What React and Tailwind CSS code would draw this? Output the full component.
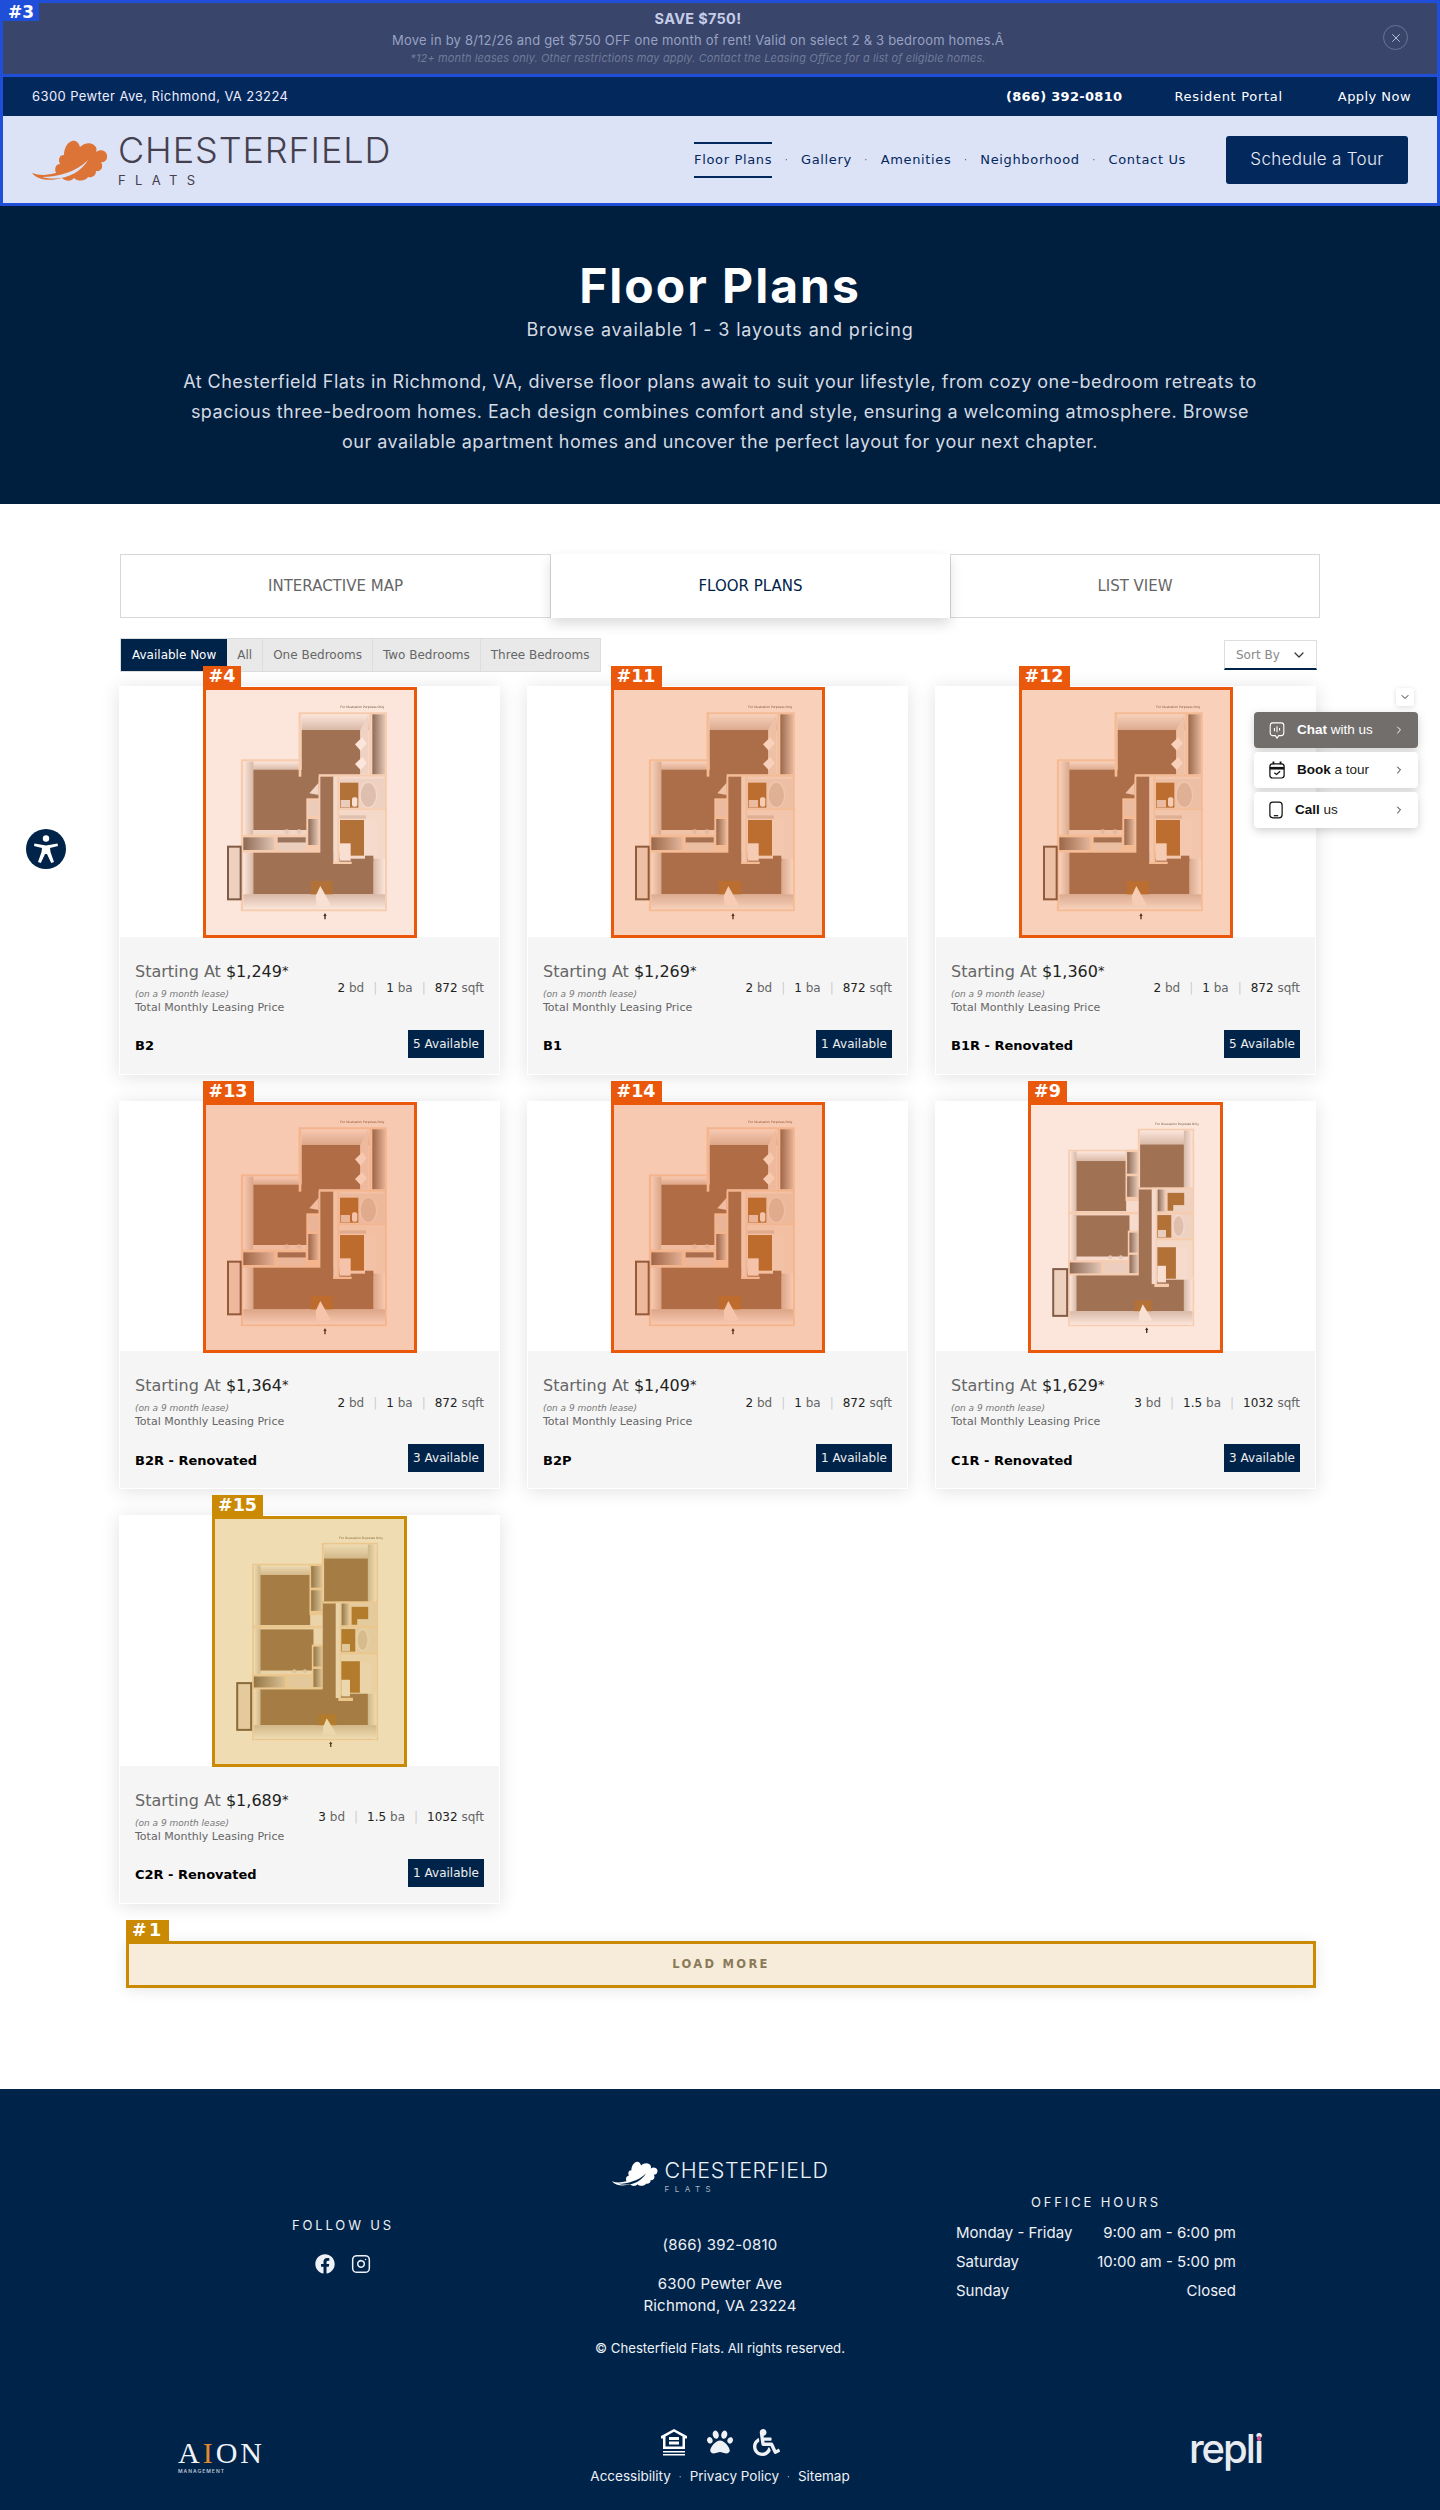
import React from "react";
import { X, ChevronDown, ChevronRight, Instagram } from "lucide-react";
import { FaFacebook, FaPaw, FaWheelchair } from "react-icons/fa";

const DJ = "font-['DejaVu_Sans',sans-serif]";
const MT = "font-['Inter','Liberation_Sans',sans-serif]";

function Defs() {
  return (
    <defs>
      <linearGradient id="wd" x1="0" y1="0" x2="0" y2="1">
        <stop offset="0" stopColor="#ffffff" />
        <stop offset="1" stopColor="#d6cbc3" />
      </linearGradient>
      <linearGradient id="wu" x1="0" y1="1" x2="0" y2="0">
        <stop offset="0" stopColor="#ffffff" />
        <stop offset="1" stopColor="#d6cbc3" />
      </linearGradient>
      <linearGradient id="wr" x1="0" y1="0" x2="1" y2="0">
        <stop offset="0" stopColor="#ffffff" />
        <stop offset="1" stopColor="#d4c9c1" />
      </linearGradient>
      <linearGradient id="wl" x1="1" y1="0" x2="0" y2="0">
        <stop offset="0" stopColor="#ffffff" />
        <stop offset="1" stopColor="#d4c9c1" />
      </linearGradient>
      <linearGradient id="cl" x1="0" y1="0" x2="1" y2="0">
        <stop offset="0" stopColor="#7d6d62" />
        <stop offset="1" stopColor="#e2dad4" />
      </linearGradient>
    </defs>
  );
}

const WALL = "#f9e1ca";
const FLOOR = "#957660";
const WOOD = "#a9763f";
const LIGHT = "#f8f3ef";

function PlanOne() {
  return (
    <svg viewBox="18 30 624 735" className="block w-full h-full blur-[0.6px]">
      <Defs />
      <text x="421" y="85" fontSize="9" fill="#5a5048" fontFamily="DejaVu Sans">For Illustration Purposes Only</text>
      <path d="M126 241H299V100H557V690H126Z" fill={LIGHT} stroke={WALL} strokeWidth="7" />
      <rect x="305" y="103" width="203" height="47" fill="url(#wd)" />
      <rect x="305" y="150" width="176" height="133" fill={FLOOR} />
      <path d="M481 150L505 103V283H481Z" fill="#f0e8e2" />
      <path d="M465 193L487 172 500 190 482 212Z" fill="#fff" />
      <path d="M465 252L487 231 500 250 482 270Z" fill="#fff" />
      <rect x="508" y="100" width="6" height="190" fill={WALL} />
      <rect x="517" y="103" width="38" height="180" fill="url(#cl)" />
      <rect x="296" y="284" width="264" height="6" fill={WALL} />
      <rect x="296" y="290" width="60" height="18" fill="#ece3dc" />
      <rect x="130" y="245" width="166" height="24" fill="url(#wd)" />
      <rect x="130" y="245" width="30" height="222" fill="url(#wr)" />
      <rect x="160" y="269" width="196" height="181" fill={FLOOR} />
      <rect x="296" y="240" width="8" height="50" fill={WALL} />
      <path d="M328 340L356 308V345Z" fill="#f3ebe5" />
      <rect x="356" y="290" width="5" height="70" fill={WALL} />
      <rect x="160" y="450" width="160" height="15" fill="#f3ebe5" />
      <rect x="123" y="464" width="237" height="54" fill={WALL} />
      <rect x="130" y="472" width="93" height="38" fill="url(#cl)" />
      <rect x="233" y="472" width="84" height="16" fill="#8d7a6d" />
      <rect x="233" y="488" width="84" height="24" fill="#ece3dc" />
      <circle cx="260" cy="455" r="7" fill="#e6dcd4" />
      <circle cx="297" cy="455" r="7" fill="#e6dcd4" />
      <rect x="319" y="355" width="41" height="163" fill={WALL} />
      <rect x="325" y="362" width="30" height="46" fill="#ebe1da" />
      <rect x="325" y="417" width="30" height="78" fill="url(#cl)" />
      <rect x="361" y="290" width="40" height="240" fill={FLOOR} />
      <rect x="130" y="518" width="30" height="170" fill="url(#wr)" />
      <rect x="520" y="518" width="35" height="170" fill="url(#wl)" />
      <rect x="160" y="518" width="360" height="125" fill={FLOOR} />
      <rect x="130" y="643" width="425" height="45" fill="url(#wu)" />
      <rect x="400" y="290" width="18" height="262" fill="#f7f1ec" />
      <rect x="400" y="545" width="55" height="7" fill={WALL} />
      <rect x="412" y="290" width="6" height="262" fill={WALL} />
      <rect x="418" y="296" width="137" height="90" fill="#efe7e0" />
      <rect x="420" y="308" width="55" height="75" fill={WOOD} />
      <ellipse cx="505" cy="345" rx="25" ry="38" fill="#dcd1c9" stroke="#f6f0ec" strokeWidth="4" />
      <rect x="422" y="360" width="28" height="22" fill="#eae1db" />
      <rect x="456" y="352" width="16" height="28" rx="6" fill="#fbf7f4" />
      <rect x="412" y="385" width="148" height="6" fill={WALL} />
      <rect x="418" y="391" width="137" height="145" fill="#f6f0ea" />
      <rect x="418" y="406" width="80" height="10" fill="#ded2c9" />
      <rect x="420" y="420" width="75" height="107" fill={WOOD} />
      <rect x="492" y="420" width="38" height="110" fill="#f8f3ef" />
      <rect x="420" y="490" width="32" height="52" fill="#fbf7f4" />
      <rect x="495" y="527" width="25" height="16" fill={FLOOR} />
      <rect x="332" y="603" width="66" height="40" fill={WOOD} />
      <path d="M347 648L361 618 391 672 391 678H350Z" fill="#fbf8f5" />
      <rect x="84" y="500" width="38" height="158" fill="#efe6df" stroke="#6e5c50" strokeWidth="6" />
      <path d="M373 718V708H370L375 699 380 708H377V718Z" fill="#222" />
    </svg>
  );
}

function PlanThree() {
  return (
    <svg viewBox="33 45 570 735" className="block w-full h-full blur-[0.6px]">
      <Defs />
      <text x="408" y="104" fontSize="9" fill="#5a5048" fontFamily="DejaVu Sans">For Illustration Purposes Only</text>
      <path d="M148 181H358V118H522V707H148Z" fill={LIGHT} stroke={WALL} strokeWidth="6" />
      <rect x="362" y="120" width="158" height="42" fill="url(#wd)" />
      <rect x="494" y="120" width="26" height="172" fill="url(#wl)" />
      <rect x="362" y="162" width="132" height="130" fill={FLOOR} />
      <rect x="150" y="183" width="170" height="29" fill="url(#wd)" />
      <rect x="150" y="183" width="20" height="182" fill="url(#wr)" />
      <rect x="170" y="212" width="150" height="151" fill={FLOOR} />
      <rect x="318" y="178" width="42" height="155" fill={WALL} />
      <rect x="323" y="185" width="32" height="65" fill="url(#cl)" />
      <rect x="323" y="258" width="32" height="62" fill="url(#cl)" />
      <rect x="145" y="365" width="210" height="8" fill={WALL} />
      <rect x="150" y="373" width="20" height="138" fill="url(#wr)" />
      <rect x="170" y="376" width="160" height="124" fill={FLOOR} />
      <rect x="145" y="511" width="218" height="46" fill={WALL} />
      <rect x="150" y="518" width="95" height="33" fill="url(#cl)" />
      <rect x="255" y="518" width="70" height="33" fill="#ece3dc" />
      <circle cx="272" cy="502" r="6" fill="#e6dcd4" />
      <circle cx="304" cy="502" r="6" fill="#e6dcd4" />
      <rect x="325" y="422" width="36" height="135" fill={WALL} />
      <rect x="330" y="428" width="26" height="60" fill="url(#cl)" />
      <rect x="330" y="495" width="26" height="55" fill="url(#cl)" />
      <rect x="358" y="292" width="40" height="290" fill={FLOOR} />
      <rect x="358" y="292" width="165" height="6" fill={WALL} />
      <rect x="150" y="557" width="20" height="150" fill="url(#wr)" />
      <rect x="494" y="557" width="26" height="150" fill="url(#wl)" />
      <rect x="170" y="557" width="324" height="108" fill={FLOOR} />
      <rect x="150" y="665" width="370" height="41" fill="url(#wu)" />
      <rect x="397" y="298" width="15" height="285" fill="#f8f3ef" />
      <rect x="409" y="298" width="4" height="285" fill={WALL} />
      <rect x="405" y="582" width="44" height="10" fill={WALL} />
      <rect x="412" y="298" width="108" height="68" fill="#efe7e0" />
      <rect x="415" y="298" width="22" height="66" fill="url(#cl)" />
      <rect x="437" y="298" width="5" height="68" fill={WALL} />
      <rect x="445" y="308" width="50" height="54" fill={WOOD} />
      <rect x="462" y="345" width="38" height="18" fill="#efe7e1" />
      <rect x="412" y="365" width="110" height="7" fill={WALL} />
      <rect x="412" y="372" width="108" height="73" fill="#efe7e0" />
      <rect x="414" y="375" width="42" height="68" fill={WOOD} />
      <ellipse cx="478" cy="408" rx="17" ry="32" fill="#dcd1c9" stroke="#f6f0ec" strokeWidth="4" />
      <rect x="416" y="420" width="24" height="22" fill="#eae1db" />
      <rect x="412" y="445" width="110" height="7" fill={WALL} />
      <rect x="412" y="452" width="108" height="118" fill="#f6f0ea" />
      <rect x="414" y="472" width="58" height="95" fill={WOOD} />
      <rect x="470" y="472" width="32" height="95" fill="#f8f3ef" />
      <rect x="414" y="528" width="26" height="50" fill="#fbf7f4" />
      <rect x="345" y="632" width="54" height="33" fill={WOOD} />
      <path d="M360 668L370 644 398 690 398 694H358Z" fill="#fbf8f5" />
      <rect x="100" y="538" width="42" height="141" fill="#efe6df" stroke="#6e5c50" strokeWidth="6" />
      <path d="M380 731V722H377L382 714 387 722H384V731Z" fill="#222" />
    </svg>
  );
}

function Leaf({ fill, vein, className }) {
  return (
    <svg viewBox="0 0 76 42" className={className}>
      <path
        fill={fill}
        d="M0 33C8 36 16 35 24 33C22 28 24 24 28 24C26 20 27 15 32 15C32 10 34 3 40 1C44 0 47 3 48 7C52 3 58 2 62 5C66 8 64 12 64 12C68 9 74 10 75 15C76 20 72 23 69 22C72 27 69 32 64 31C64 36 60 38 56 37C54 41 46 42 42 38C40 41 34 42 30 38C20 41 6 41 0 33Z"
      />
      <path fill={vein} d="M10 37C26 37 44 32 56 20C48 34 30 42 10 37Z" />
    </svg>
  );
}

function Badge({ label, color, className = "" }) {
  return (
    <div
      className={`absolute h-[21px] px-[6px] ${color} ${DJ} text-[17.5px] leading-[21px] font-bold text-white ${className}`}
    >
      {label}
    </div>
  );
}

const cards = [
  { n: "#4", price: "$1,249", bd: "2", ba: "1", sf: "872", name: "B2", av: "5 Available", tint: "bg-[#ea580c]/15", plan: 1 },
  { n: "#11", price: "$1,269", bd: "2", ba: "1", sf: "872", name: "B1", av: "1 Available", tint: "bg-[#ea580c]/28", plan: 1 },
  { n: "#12", price: "$1,360", bd: "2", ba: "1", sf: "872", name: "B1R - Renovated", av: "5 Available", tint: "bg-[#ea580c]/28", plan: 1 },
  { n: "#13", price: "$1,364", bd: "2", ba: "1", sf: "872", name: "B2R - Renovated", av: "3 Available", tint: "bg-[#ea580c]/32", plan: 1 },
  { n: "#14", price: "$1,409", bd: "2", ba: "1", sf: "872", name: "B2P", av: "1 Available", tint: "bg-[#ea580c]/32", plan: 1 },
  { n: "#9", price: "$1,629", bd: "3", ba: "1.5", sf: "1032", name: "C1R - Renovated", av: "3 Available", tint: "bg-[#ea580c]/15", plan: 3 },
  { n: "#15", price: "$1,689", bd: "3", ba: "1.5", sf: "1032", name: "C2R - Renovated", av: "1 Available", tint: "bg-[#ca8a04]/30", plan: 3, amber: true },
];

function Card({ c }) {
  const w = c.plan === 1 ? "w-[214px]" : "w-[195px]";
  return (
    <div className={`relative h-[388.67px] bg-white shadow-[0_2px_18px_rgba(0,0,0,0.12)] ${DJ}`}>
      <div className="h-[250.67px] flex justify-center">
        <div
          className={`relative z-10 ${w} h-[251px] mt-[1px] border-[3px] ${c.amber ? "border-[#ca8a04]" : "border-[#ea580c]"}`}
        >
          <Badge label={c.n} color={c.amber ? "bg-[#ca8a04]" : "bg-[#ea580c]"} className="left-[-3px] top-[-24px]" />
          <div className="relative w-full h-full bg-white overflow-hidden">
            {c.plan === 1 ? <PlanOne /> : <PlanThree />}
            <div className={`absolute inset-0 ${c.tint}`} />
          </div>
        </div>
      </div>
      <div className="mx-[1px] h-[137px] bg-[#f5f5f5] px-[15px] pt-[24px]">
        <div className="flex justify-between items-center">
          <div>
            <div className="text-[16px] leading-[20px] text-[#666]">
              Starting At <span className="text-[#222]">{c.price}</span>
              <span className="text-[#222] text-[13px] align-[2px]">*</span>
            </div>
            <div className="mt-[6px] text-[9px] leading-[12px] italic text-[#777]">(on a 9 month lease)</div>
            <div className="text-[11px] leading-[16px] text-[#666]">Total Monthly Leasing Price</div>
          </div>
          <div className="flex items-center text-[12px] text-[#666]">
            <span>
              <span className="text-[#222]">{c.bd}</span> bd
            </span>
            <span className="mx-[9px] text-[#ccc]">|</span>
            <span>
              <span className="text-[#222]">{c.ba}</span> ba
            </span>
            <span className="mx-[9px] text-[#ccc]">|</span>
            <span>
              <span className="text-[#222]">{c.sf}</span> sqft
            </span>
          </div>
        </div>
        <div className="mt-[14px] flex justify-between items-center">
          <div className="pt-[4px] text-[13px] font-bold text-black">{c.name}</div>
          <div className="h-[28px] w-[76px] bg-[#00234a] text-center text-[12px] leading-[28px] text-[#eee]">{c.av}</div>
        </div>
      </div>
    </div>
  );
}

const Sep = ({ className = "" }) => <span className={`text-[10px] opacity-70 ${className}`}>·</span>;

function Header() {
  return (
    <header>
      <div className={`relative h-[77px] border-[3px] border-[#1f4fd8] bg-[#39456b] pr-[44px] text-center ${MT}`}>
        <div className="absolute left-[0px] top-[0px] h-[18px] w-[36px] bg-[#1f4fd8] text-center font-['DejaVu_Sans',sans-serif] text-[17px] leading-[18px] font-bold text-white">
          #3
        </div>
        <div className="pt-[7px] text-[14.5px] leading-[18px] font-bold tracking-[0.3px] text-[#c6cde8]">SAVE $750!</div>
        <div className="mt-[2px] text-[13px] leading-[20px] text-[#98a2c2] tracking-[0.2px]">
          Move in by 8/12/26 and get $750 OFF one month of rent! Valid on select 2 &amp; 3 bedroom homes.Â
        </div>
        <div className="pt-[1px] text-[11px] leading-[15px] italic text-[#717b99] tracking-[0.13px]">
          *12+ month leases only. Other restrictions may apply. Contact the Leasing Office for a list of eligible homes.
        </div>
        <button className="absolute right-[29px] top-[22px] flex h-[25px] w-[25px] items-center justify-center rounded-full border border-[#6b7595] text-[#c6cde8]">
          <X size={14} strokeWidth={1.5} />
        </button>
      </div>
      <div className="-mt-[3px] border-[3px] border-[#1f4fd8]">
        <div className="flex h-[39px] items-center bg-[#03285c] pl-[29px] pr-[26px] text-white">
          <span className={`${MT} text-[13px] tracking-[0.4px] text-[#eef]`}>6300 Pewter Ave, Richmond, VA 23224</span>
          <div className={`ml-auto flex items-center ${DJ}`}>
            <span className="text-[13px] font-bold tracking-[0.3px]">(866) 392-0810</span>
            <span className="ml-[52px] text-[13px] tracking-[0.7px]">Resident Portal</span>
            <span className="ml-[55px] text-[13px] tracking-[0.45px]">Apply Now</span>
          </div>
        </div>
        <div className="flex h-[87px] items-center bg-[#dde3f7] pl-[29px] pr-[29px]">
          <div className="flex items-center">
            <Leaf fill="#dd7437" vein="#dde3f7" className="mt-[2px] h-[42px] w-[76px]" />
            <div className="ml-[10px] text-[#44404e]">
              <div className={`${MT} mt-[1px] text-[36px] leading-[34px] font-light tracking-[0.9px]`}>CHESTERFIELD</div>
              <div className={`${MT} mt-[5px] text-[13px] leading-[16px] tracking-[0.72em]`}>FLATS</div>
            </div>
          </div>
          <nav className={`ml-auto flex items-center text-[13px] tracking-[0.65px] text-[#03285c] ${DJ}`}>
            <span className="flex h-[36px] items-center border-y-2 border-[#03285c]">Floor Plans</span>
            <Sep className="mx-[12.500px]" />
            <span>Gallery</span>
            <Sep className="mx-[12.500px]" />
            <span>Amenities</span>
            <Sep className="mx-[12.500px]" />
            <span>Neighborhood</span>
            <Sep className="mx-[12.500px]" />
            <span>Contact Us</span>
          </nav>
          <button className={`ml-[40px] h-[48px] w-[182px] rounded-[3px] bg-[#03285c] text-[17px] font-light tracking-[0.3px] text-[#e8ecf8] ${MT}`}>
            Schedule a Tour
          </button>
        </div>
      </div>
    </header>
  );
}

function Hero() {
  return (
    <section className={`h-[298px] bg-[#001f3f] pt-[50px] text-center text-white ${MT}`}>
      <h1 className="text-[48px] leading-[60px] font-bold tracking-[2px]">Floor Plans</h1>
      <p className="-mt-[1px] text-[18px] leading-[30px] tracking-[0.85px] text-[#d5dae2]">Browse available 1 - 3 layouts and pricing</p>
      <p className="mt-[22px] text-[18px] leading-[30px] tracking-[0.48px] text-[#d5dae2]">
        At Chesterfield Flats in Richmond, VA, diverse floor plans await to suit your lifestyle, from cozy one-bedroom retreats to
        <br />
        spacious three-bedroom homes. Each design combines comfort and style, ensuring a welcoming atmosphere. Browse
        <br />
        our available apartment homes and uncover the perfect layout for your next chapter.
      </p>
    </section>
  );
}

function Tabs() {
  return (
    <div className={`flex h-[64px] text-[15px] ${DJ}`}>
      <div className="flex w-[431px] items-center justify-center border border-[#d8d8d8] text-[#666]">INTERACTIVE MAP</div>
      <div className="relative flex w-[399px] items-center justify-center bg-white text-[#00234a] shadow-[0_6px_12px_rgba(0,0,0,0.14)]">FLOOR PLANS</div>
      <div className="flex w-[370px] items-center justify-center border border-[#d8d8d8] text-[#666]">LIST VIEW</div>
    </div>
  );
}

function Filters() {
  const items = ["All", "One Bedrooms", "Two Bedrooms", "Three Bedrooms"];
  return (
    <div className={`mt-[20px] flex items-start justify-between pr-[3px] ${DJ}`}>
      <div className="flex h-[34px] border border-[#ddd] bg-[#e9e9e9] text-[12px] text-[#666]">
        <span className="flex items-center bg-[#00234a] px-[11px] text-white">Available Now</span>
        {items.map((t, i) => (
          <span key={t} className={`flex items-center px-[10px] ${i < 3 ? "border-r border-[#ddd]" : ""}`}>
            {t}
          </span>
        ))}
      </div>
      <div className="mt-[2px] flex h-[30px] w-[93px] items-center justify-between border border-[#ddd] border-b-[2px] border-b-[#00234a] pl-[11px] pr-[9px] text-[12px] text-[#888]">
        Sort By
        <ChevronDown size={16} strokeWidth={1.8} className="text-[#333]" />
      </div>
    </div>
  );
}

function Footer() {
  return (
    <footer className={`h-[421px] bg-[#00234a] text-[#eef1f5] ${MT}`}>
      <div className="grid h-[286px] grid-cols-[566px_308px_1fr] text-center">
        <div className="pt-[127px] pl-[120px]">
          <div className="text-[13px] leading-[18px] tracking-[0.22em]">FOLLOW US</div>
          <div className="mt-[20px] flex items-center justify-center gap-[16px]">
            <FaFacebook size={20} />
            <Instagram size={20} strokeWidth={1.8} />
          </div>
        </div>
        <div className="pt-[67px]">
          <div className="flex items-start justify-center">
            <Leaf fill="#ffffff" vein="#00234a" className="mt-[5px] h-[26px] w-[46px]" />
            <div className="ml-[7px] text-left">
              <div className="mt-[4px] text-[21.5px] leading-[20px] font-light tracking-[0.6px]">CHESTERFIELD</div>
              <div className="mt-[4px] text-[8px] leading-[10px] tracking-[0.68em] text-[#aab4c2]">FLATS</div>
            </div>
          </div>
          <div className="mt-[40px] text-[15px] leading-[22px] tracking-[0.2px]">(866) 392-0810</div>
          <div className="mt-[17px] text-[15px] leading-[22px] tracking-[0.2px]">
            6300 Pewter Ave
            <br />
            Richmond, VA 23224
          </div>
          <div className="mt-[21px] text-[13.200px] leading-[20px]">© Chesterfield Flats. All rights reserved.</div>
        </div>
        <div className="pt-[104px] pl-[82px] pr-[204px]">
          <div className="text-[13px] leading-[18px] tracking-[0.22em]">OFFICE HOURS</div>
          <div className="mt-[7px] text-[15px] leading-[29px]">
            <div className="flex justify-between"><span>Monday - Friday</span><span>9:00 am - 6:00 pm</span></div>
            <div className="flex justify-between"><span>Saturday</span><span>10:00 am - 5:00 pm</span></div>
            <div className="flex justify-between"><span>Sunday</span><span>Closed</span></div>
          </div>
        </div>
      </div>
      <div className="grid grid-cols-[1fr_auto_1fr] px-[178px] pt-[53px]">
        <div className="pt-[12px]">
          <div className="font-['Liberation_Serif',serif] text-[30px] leading-[26px] font-normal tracking-[3px] text-[#f1f4f7]">
            A<span className="text-[#e08a2c]">I</span>ON
          </div>
          <div className="mt-[2px] text-[5px] leading-[7px] font-semibold tracking-[0.2em] text-[#b9c2cf]">MANAGEMENT</div>
        </div>
        <div className="text-center">
          <div className="flex items-center justify-center gap-[20px]">
            <svg viewBox="0 0 26 28" className="h-[28px] w-[26px]" fill="#fff">
              <path d="M13 1L0 8v2.500h2V21h22V10.500h2V8zM21.500 18.500h-17v-10L13 3.800l8.500 4.700z" />
              <rect x="8" y="9" width="10" height="3" />
              <rect x="8" y="13.500" width="10" height="3" />
              <rect x="2" y="23" width="22" height="1.500" />
              <rect x="2" y="26" width="22" height="1.500" />
            </svg>
            <FaPaw size={26} />
            <FaWheelchair size={27} />
          </div>
          <div className="mt-[10px] flex items-center justify-center text-[13.500px] leading-[20px]">
            Accessibility
            <Sep className="mx-[8px]" />
            Privacy Policy
            <Sep className="mx-[8px]" />
            Sitemap
          </div>
        </div>
        <div className="flex items-start justify-end">
          <span className="relative text-[40px] leading-[42px] font-medium tracking-[-2px] text-[#e8ecf1]">
            repli
            <span className="absolute right-[1px] top-[8px] h-[5px] w-[4px] rounded-full bg-[#d2568f]" />
          </span>
        </div>
      </div>
    </footer>
  );
}

function ChatWidget() {
  const row = "flex h-[36px] items-center rounded-[4px] pl-[15px] pr-[13px] shadow-[0_3px_10px_rgba(0,0,0,0.18)] font-['Liberation_Sans',sans-serif] text-[13.500px]";
  return (
    <div className="absolute left-[1254px] top-[688px] z-20 w-[164px]">
      <div className="mb-[6px] ml-[142px] flex h-[18px] w-[18px] items-center justify-center rounded-[3px] bg-white shadow-[0_1px_5px_rgba(0,0,0,0.14)]">
        <ChevronDown size={12} className="text-[#333]" />
      </div>
      <div className={`${row} bg-[#716e6c] text-white`}>
        <svg viewBox="0 0 18 20" className="h-[17px] w-[16px]" fill="none" stroke="#fff" strokeWidth="1.300">
          <path d="M4 1h10a3 3 0 0 1 3 3v9a3 3 0 0 1-3 3h-3l-2 3-2-3H4a3 3 0 0 1-3-3V4a3 3 0 0 1 3-3z" />
          <path d="M6 7v4M9 5v7M12 7v3" />
        </svg>
        <span className="ml-[12px]"><b>Chat</b> with us</span>
        <ChevronRight size={12} className="ml-auto" />
      </div>
      <div className={`${row} mt-[4px] bg-white text-[#222]`}>
        <svg viewBox="0 0 18 20" className="h-[18px] w-[16px]" fill="none" stroke="#111" strokeWidth="1.400">
          <rect x="1" y="3" width="16" height="16" rx="3" />
          <path d="M1 8h16" strokeWidth="3" />
          <path d="M5 0.500v3M13 0.500v3" strokeWidth="2" />
          <path d="M6 13l2.500 2 4-3.500" />
        </svg>
        <span className="ml-[12px]"><b className="text-[#111]">Book</b> a tour</span>
        <ChevronRight size={12} className="ml-auto" />
      </div>
      <div className={`${row} mt-[4px] bg-white text-[#222]`}>
        <svg viewBox="0 0 16 20" className="h-[18px] w-[14px]" fill="none" stroke="#111" strokeWidth="1.400">
          <rect x="1" y="1" width="14" height="18" rx="3.500" />
          <path d="M5.500 16.500h5" />
        </svg>
        <span className="ml-[12px]"><b className="text-[#111]">Call</b> us</span>
        <ChevronRight size={12} className="ml-auto" />
      </div>
    </div>
  );
}

export default function App() {
  return (
    <div className="relative h-[2510px] overflow-hidden bg-white">
      <Header />
      <Hero />
      <main className="h-[1585px] px-[120px] pt-[50px]">
        <Tabs />
        <Filters />
        <div className="mt-[14px] -ml-[1px] grid w-[1197px] grid-cols-[381px_381px_381px] gap-x-[27px] gap-y-[26px]">
          {cards.map((c) => (
            <Card key={c.n} c={c} />
          ))}
        </div>
        <div className="relative mt-[37px] ml-[6px] flex h-[47px] w-[1190px] items-center justify-center border-[3px] border-[#ca8a04] bg-[#f7ecd9] shadow-[0_2px_14px_rgba(0,0,0,0.1)] font-['DejaVu_Sans',sans-serif] text-[11.500px] font-bold tracking-[0.2em] text-[#8a7a5a]">
          <Badge label="#1" color="bg-[#ca8a04]" className="left-[-3px] top-[-24px]" />
          LOAD MORE
        </div>
      </main>
      <Footer />
      <ChatWidget />
      <svg viewBox="0 0 40 40" className="absolute left-[26px] top-[829px] z-20 h-[40px] w-[40px]">
        <circle cx="20" cy="20" r="20" fill="#00234a" />
        <circle cx="20" cy="9.500" r="3.200" fill="#fff" />
        <path d="M8.500 14.500L20 16.500 31.500 14.500 32 17 24 19 24.500 23 28 33 25.200 34 21 25H19L14.800 34 12 33 15.500 23 16 19 8 17Z" fill="#fff" />
      </svg>
    </div>
  );
}
